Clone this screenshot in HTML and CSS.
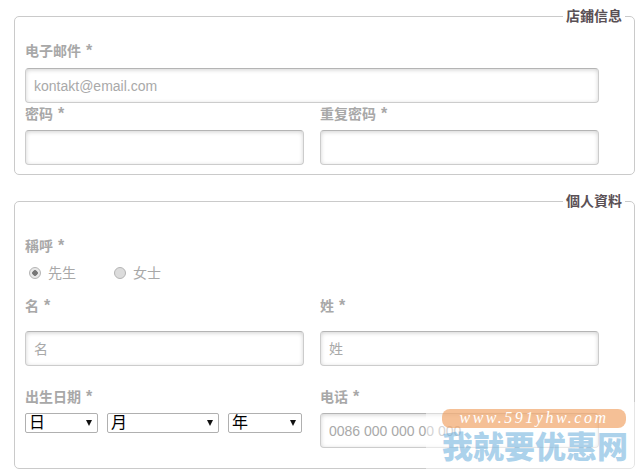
FILE: index.html
```html
<!DOCTYPE html>
<html lang="zh">
<head>
<meta charset="utf-8">
<title>Form</title>
<link rel="stylesheet" href="styles.css">
</head>
<body>
<form class="page">
  <fieldset class="group group-shop">
    <legend>店鋪信息</legend>
    <div class="field field-email">
      <label class="label">电子邮件 <span class="req">*</span></label>
      <input class="input input-full" type="text" placeholder="kontakt@email.com">
    </div>
    <div class="row row-tight">
      <div class="field">
        <label class="label">密码 <span class="req">*</span></label>
        <input class="input" type="password">
      </div>
      <div class="field">
        <label class="label">重复密码 <span class="req">*</span></label>
        <input class="input" type="password">
      </div>
    </div>
  </fieldset>
  <fieldset class="group group-person">
    <legend>個人資料</legend>
    <label class="label label-title">稱呼 <span class="req">*</span></label>
    <div class="radios">
      <span class="radio-item"><span class="radio radio-on"></span>先生</span>
      <span class="radio-item"><span class="radio"></span>女士</span>
    </div>
    <div class="row row-name">
      <div class="field">
        <label class="label label-name">名 <span class="req">*</span></label>
        <input class="input" type="text" placeholder="名">
      </div>
      <div class="field">
        <label class="label label-name">姓 <span class="req">*</span></label>
        <input class="input" type="text" placeholder="姓">
      </div>
    </div>
    <div class="row row-birth">
      <div class="field">
        <label class="label">出生日期 <span class="req">*</span></label>
        <div class="selects">
          <span class="select select-day">日</span>
          <span class="select select-month">月</span>
          <span class="select select-year">年</span>
        </div>
      </div>
      <div class="field">
        <label class="label">电话 <span class="req">*</span></label>
        <input class="input" type="text" placeholder="0086 000 000 00 000">
      </div>
    </div>
  </fieldset>
</form>
<div class="watermark">
  <div class="wm-pill">www.591yhw.com</div>
  <div class="wm-name">我就要优惠网</div>
</div>
</body>
</html>
```
FILE: styles.css
```css
* { box-sizing: border-box; }
html, body { margin: 0; height: 472px; overflow: hidden; background: #fff; }
body { font-family: "Liberation Sans", "Noto Sans CJK SC", sans-serif; position: relative; }
.page { padding: 8px 6px 0 14px; }
.group {
  margin: 0;
  border: 1px solid #cacaca;
  border-radius: 5px;
  padding: 0 10px;
  min-width: 0;
}
.group legend {
  margin-left: auto;
  margin-right: -1px;
  padding: 0 3px;
  font-size: 14px;
  line-height: 16px;
  font-weight: 700;
  color: #5a5055;
}
.group-shop { height: 167px; padding-top: 19px; }
.group-person { height: 276px; margin-top: 18px; padding-top: 29px; }
.label {
  display: block;
  font-size: 14px;
  line-height: 17px;
  font-weight: 700;
  color: #a8a8a8;
}
.req { font-size: 16px; line-height: 14px; margin-left: 1px; }
.row { display: grid; grid-template-columns: 279px 279px; column-gap: 16px; }
.row-tight { margin-top: 3px; }
.field-email .label { margin-bottom: 8px; }
.row-tight .label { margin-bottom: 7px; }
.input {
  display: block;
  width: 279px;
  height: 35px;
  border: 1px solid #cccccc;
  border-top-color: #b4b4b4;
  border-radius: 4px;
  padding: 0 8px;
  background: #fff;
  box-shadow: inset 0 1px 4px rgba(0,0,0,.18);
  font-family: inherit;
  font-size: 14px;
  outline: none;
}
.input-full { width: 574px; }
.input::placeholder { color: #a9a9a9; opacity: 1; }
.radios { display: flex; margin-top: 8px; padding-left: 4px; font-size: 14px; line-height: 20px; color: #a8a8a8; }
.radio-item { display: flex; align-items: center; width: 85px; }
.radio {
  width: 12px;
  height: 12px;
  margin-right: 7px;
  border-radius: 50%;
  border: 1px solid #b4b4b4;
  background: #dcdcdc;
}
.radio-on { background: radial-gradient(circle, #777 0 2.5px, #e8e8e8 3px); }
.row-name { margin-top: 15px; }
.label-name { margin-bottom: 16px; }
.row-birth { margin-top: 23px; }
.row-birth .label { margin-bottom: 7px; }
.selects { display: flex; gap: 9px; }
.select {
  position: relative;
  display: block;
  height: 20px;
  border: 1px solid #b0b0b0;
  border-radius: 2px;
  padding-left: 3px;
  font-size: 16px;
  line-height: 18px;
  color: #000;
  background: #fff;
}
.select::after {
  content: "";
  position: absolute;
  right: 5px;
  top: 6px;
  border-left: 3.5px solid transparent;
  border-right: 3.5px solid transparent;
  border-top: 6px solid #111;
}
.select-day { width: 73px; }
.select-month { width: 112px; }
.select-year { width: 74px; }
.watermark {
  position: absolute;
  left: 426px;
  top: 402px;
  width: 215px;
  height: 70px;
  padding: 7px 15px 0 16px;
  background: rgba(255,255,255,.5);
}
.wm-pill {
  height: 19px;
  border-radius: 8px;
  background: rgba(238,150,80,.6);
  color: #fff;
  font-family: "Liberation Serif", serif;
  font-style: italic;
  font-size: 16px;
  line-height: 18px;
  letter-spacing: 2.5px;
  text-align: center;
  white-space: nowrap;
}
.wm-name {
  margin-top: -1px;
  font-family: "Noto Sans CJK SC", sans-serif;
  font-weight: 900;
  font-size: 31px;
  line-height: 36px;
  color: rgba(90,165,215,.5);
  white-space: nowrap;
}
```
